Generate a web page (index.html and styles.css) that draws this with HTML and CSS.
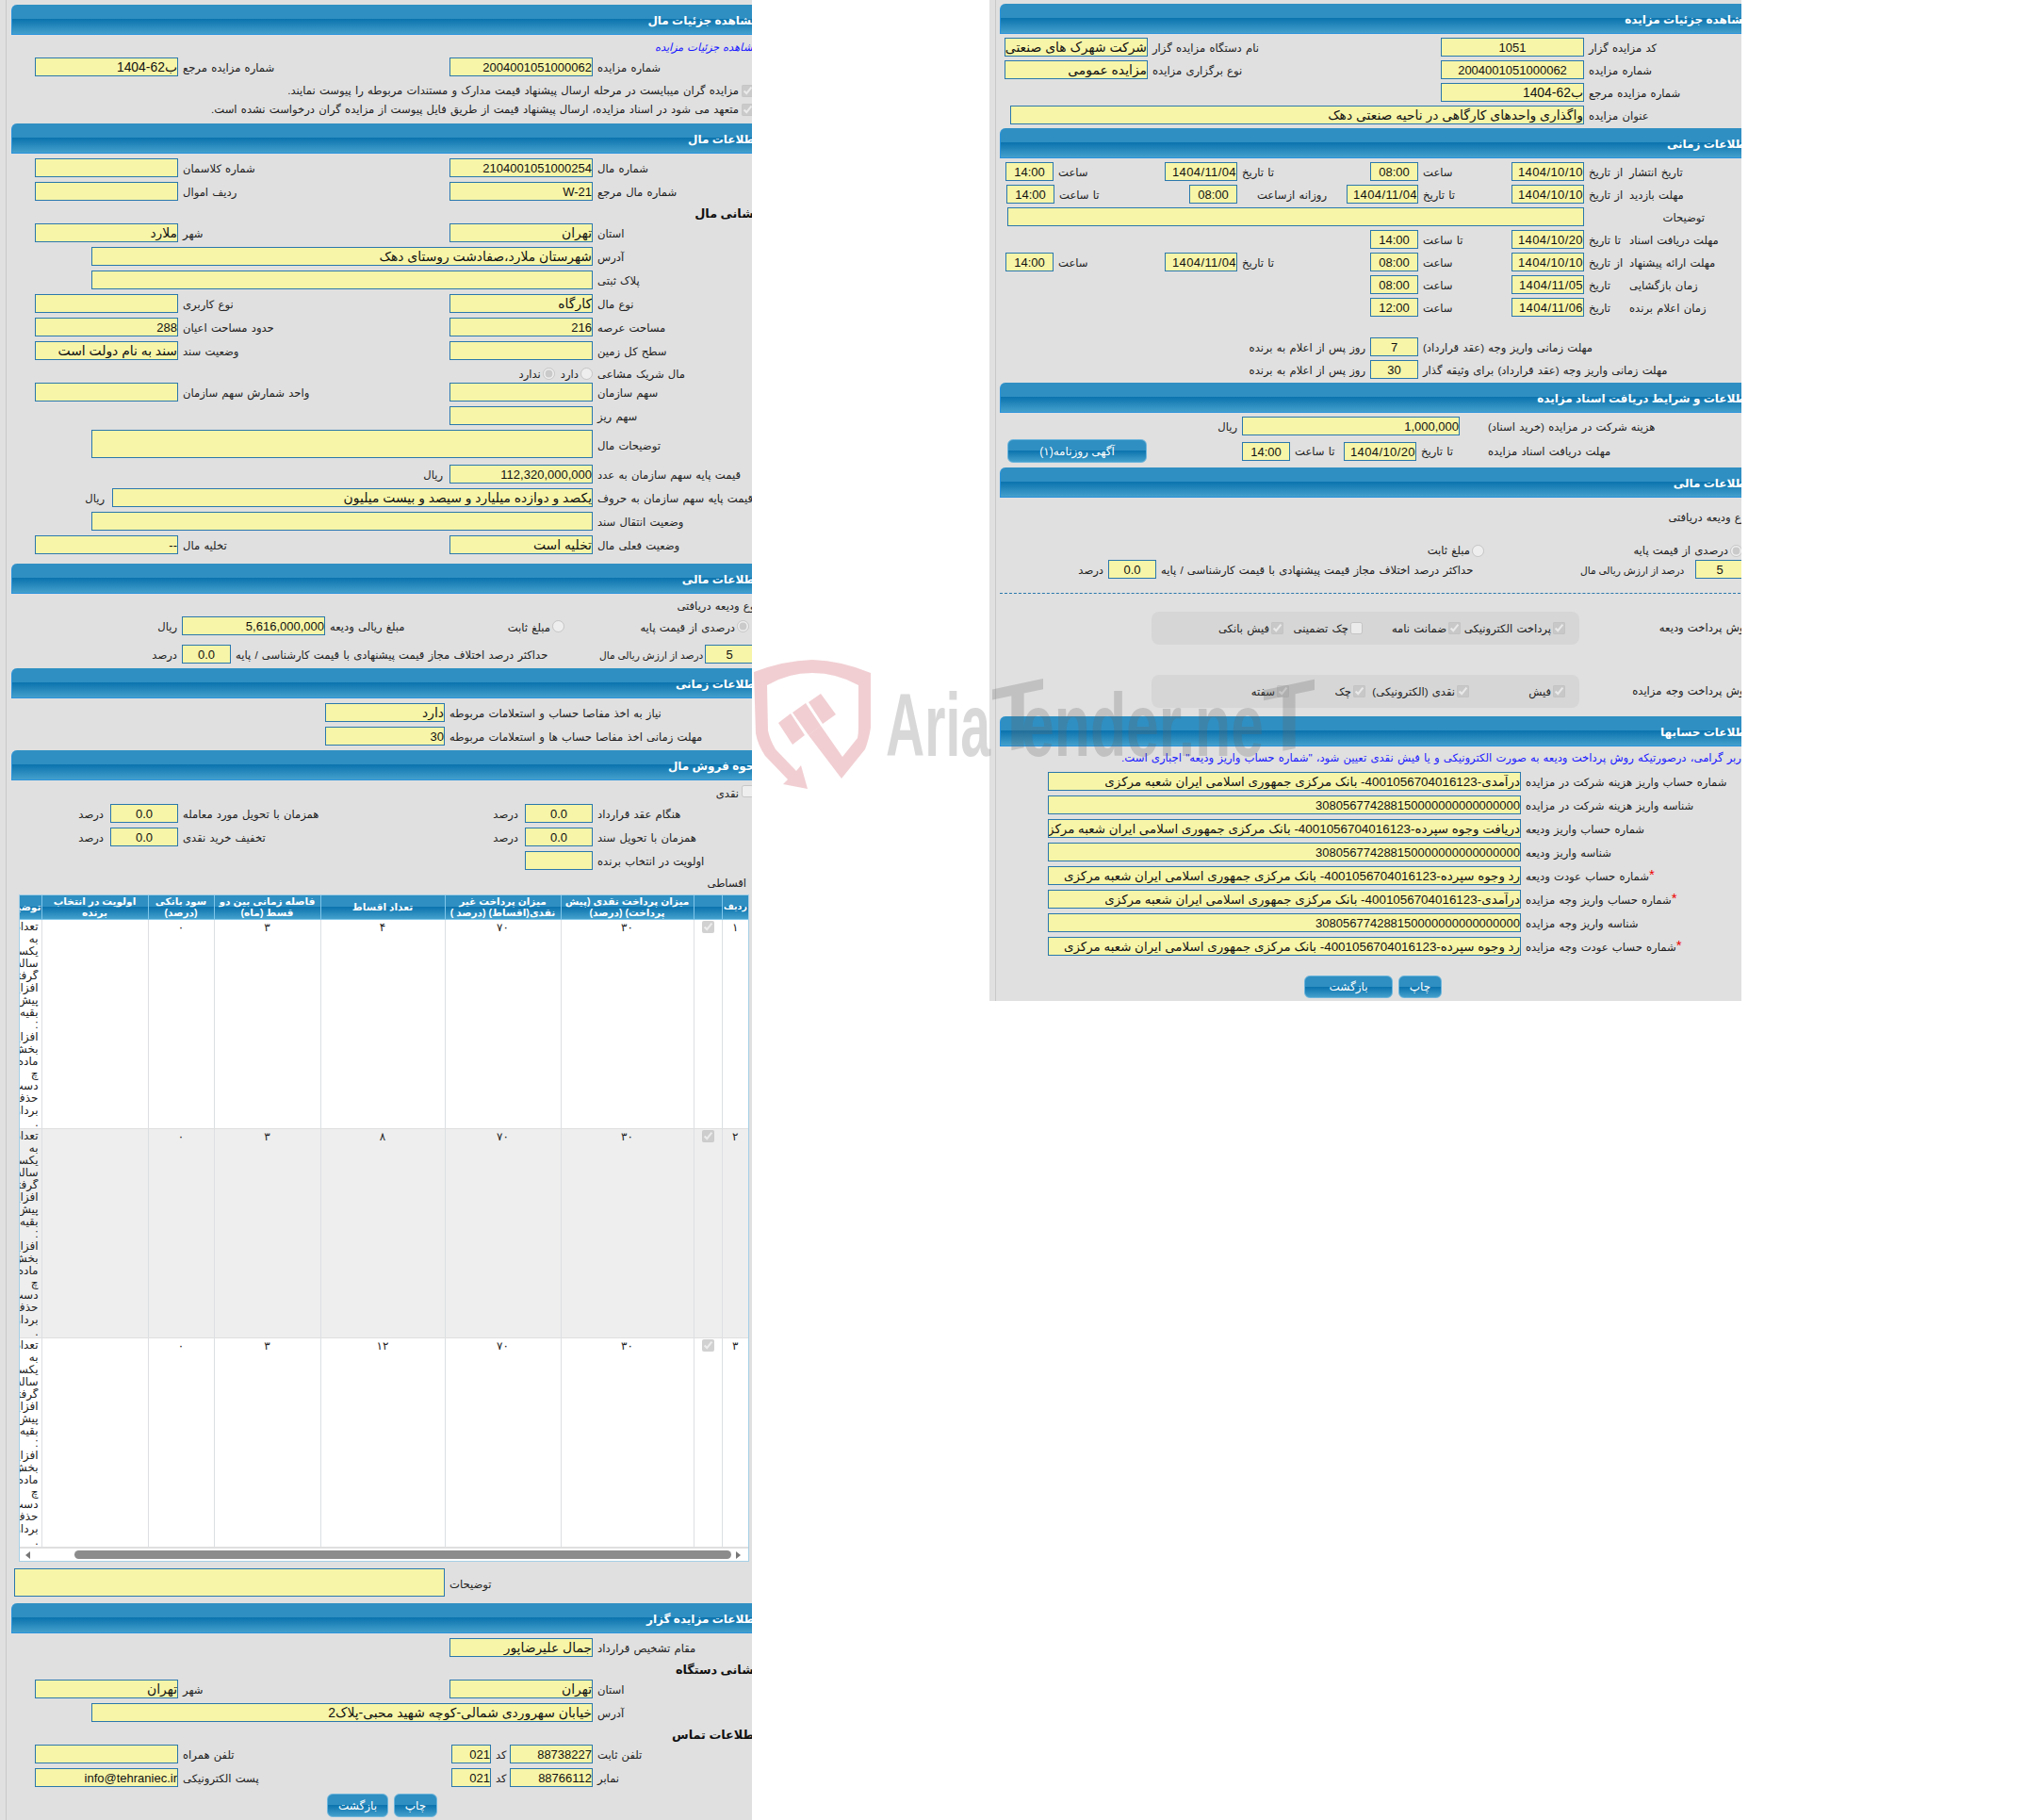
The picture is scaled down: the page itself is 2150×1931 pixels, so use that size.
FILE: index.html
```html
<!DOCTYPE html>
<html lang="fa">
<head>
<meta charset="utf-8">
<title>AriaTender</title>
<link rel="stylesheet" href="styles.css">
</head>
<body>
<div class="page">

<!-- جزئیات مال -->
<div class="panel panel-l">
<div class="inner">
<div class="body body-l">
  <h2 class="hdr">مشاهده جزئیات مال</h2>
  <div class="row r24"><a class="link" href="#">مشاهده جزئیات مزایده</a></div>
  <div class="row">
    <span class="lab w176">شماره مزایده</span><input class="fld w152" readonly value="2004001051000062">
    <span class="lab w288">شماره مزایده مرجع</span><input class="fld w152 fa" readonly value="ب62-1404">
  </div>
  <div class="row r20 chk"><input type="checkbox" disabled checked><span>مزایده گران میبایست در مرحله ارسال پیشنهاد قیمت مدارک و مستندات مربوطه را پیوست نمایند.</span></div>
  <div class="row r20 chk"><input type="checkbox" disabled checked><span>متعهد می شود در اسناد مزایده، ارسال پیشنهاد قیمت از طریق فایل پیوست از مزایده گران درخواست نشده است.</span></div>

  <h2 class="hdr mt5">اطلاعات مال</h2>
  <div class="sec">
    <div class="row">
      <span class="lab w176">شماره مال</span><input class="fld w152" readonly value="2104001051000254">
      <span class="lab w288">شماره کلاسمان</span><input class="fld w152" readonly>
    </div>
    <div class="row">
      <span class="lab w176">شماره مال مرجع</span><input class="fld w152" readonly value="W-21">
      <span class="lab w288">ردیف اموال</span><input class="fld w152" readonly>
    </div>
    <div class="sub">نشانی مال</div>
    <div class="row">
      <span class="lab w176">استان</span><input class="fld w152 fa" readonly value="تهران">
      <span class="lab w288">شهر</span><input class="fld w152 fa" readonly value="ملارد">
    </div>
    <div class="row"><span class="lab w176">آدرس</span><input class="fld w532 fa" readonly value="شهرستان ملارد،صفادشت روستای دهک"></div>
    <div class="row"><span class="lab w176">پلاک ثبتی</span><input class="fld w532" readonly></div>
    <div class="row">
      <span class="lab w176">نوع مال</span><input class="fld w152 fa" readonly value="کارگاه">
      <span class="lab w288">نوع کاربری</span><input class="fld w152" readonly>
    </div>
    <div class="row">
      <span class="lab w176">مساحت عرصه</span><input class="fld w152" readonly value="216">
      <span class="lab w288">حدود مساحت اعیان</span><input class="fld w152" readonly value="288">
    </div>
    <div class="row">
      <span class="lab w176">سطح کل زمین</span><input class="fld w152" readonly>
      <span class="lab w288">وضعیت سند</span><input class="fld w152 fa" readonly value="سند به نام دولت است">
    </div>
    <div class="row r19 opts share">
      <span class="lab w176">مال شریک مشاعی</span>
      <input type="radio" disabled><span class="opt">دارد</span>
      <input type="radio" disabled checked><span class="opt">ندارد</span>
    </div>
    <div class="row">
      <span class="lab w176">سهم سازمان</span><input class="fld w152" readonly>
      <span class="lab w288">واحد شمارش سهم سازمان</span><input class="fld w152" readonly>
    </div>
    <div class="row"><span class="lab w176">سهم ریز</span><input class="fld w152" readonly></div>
    <div class="row r37"><span class="lab w176 tall">توضیحات مال</span><textarea class="fld w532 h30" readonly></textarea></div>
    <div class="row">
      <span class="lab w176">قیمت پایه سهم سازمان به عدد</span><input class="fld w152" readonly value="112,320,000,000">
      <span class="unit u7">ریال</span>
    </div>
    <div class="row">
      <span class="lab w176">قیمت پایه سهم سازمان به حروف</span><input class="fld w510 fa" readonly value="یکصد و دوازده میلیارد و سیصد و بیست میلیون">
      <span class="unit u8">ریال</span>
    </div>
    <div class="row"><span class="lab w176">وضعیت انتقال سند</span><input class="fld w532" readonly></div>
    <div class="row">
      <span class="lab w176">وضعیت فعلی مال</span><input class="fld w152 fa" readonly value="تخلیه است">
      <span class="lab w288">تخلیه مال</span><input class="fld w152" readonly value="--">
    </div>
  </div>

  <h2 class="hdr mt5">اطلاعات مالی</h2>
  <div class="row r24 plain">نوع ودیعه دریافتی</div>
  <div class="row r30 opts-f">
    <span class="pad10"></span><input type="radio" disabled checked><span class="opt w181">درصدی از قیمت پایه</span>
    <input type="radio" disabled><span class="opt w154">مبلغ ثابت</span>
    <span class="lab w85">مبلغ ریالی ودیعه</span><input class="fld w152" readonly value="5,616,000,000">
    <span class="unit u5">ریال</span>
  </div>
  <div class="row">
    <span class="pad5"></span><input class="fld w52 ctr" readonly value="5">
    <span class="lab w117 sm">درصد از ارزش ریالی مال</span>
    <span class="lab w386">حداکثر درصد اختلاف مجاز قیمت پیشنهادی با قیمت کارشناسی / پایه</span>
    <input class="fld w52 ctr" readonly value="0.0">
    <span class="unit u5">درصد</span>
  </div>

  <h2 class="hdr">اطلاعات زمانی</h2>
  <div class="sec">
    <div class="row"><span class="lab w333">نیاز به اخذ مفاصا حساب و استعلامات مربوطه</span><input class="fld w127 fa" readonly value="دارد"></div>
    <div class="row"><span class="lab w333">مهلت زمانی اخذ مفاصا حساب ها و استعلامات مربوطه</span><input class="fld w127" readonly value="30"></div>
  </div>

  <h2 class="hdr">نحوه فروش مال</h2>
  <div class="row chk cash"><input type="checkbox" disabled><span>نقدی</span></div>
  <div class="row">
    <span class="lab w176">هنگام عقد قرارداد</span><input class="fld w72 ctr" readonly value="0.0"><span class="unit u7 w30">درصد</span>
    <span class="lab w331">همزمان با تحویل مورد معامله</span><input class="fld w72 ctr" readonly value="0.0"><span class="unit u7">درصد</span>
  </div>
  <div class="row">
    <span class="lab w176">همزمان با تحویل سند</span><input class="fld w72 ctr" readonly value="0.0"><span class="unit u7 w30">درصد</span>
    <span class="lab w331">تخفیف خرید نقدی</span><input class="fld w72 ctr" readonly value="0.0"><span class="unit u7">درصد</span>
  </div>
  <div class="row"><span class="lab w176">اولویت در انتخاب برنده</span><input class="fld w72" readonly></div>
  <div class="row r21 plain plain-in">اقساطی</div>

  <div class="grid-wrap">
    <table class="grid">
      <thead>
        <tr>
          <th class="c28">ردیف</th><th class="c30"></th><th class="c141">میزان پرداخت نقدی (پیش<br>پرداخت) (درصد)</th>
          <th class="c123">میزان پرداخت غیر<br>نقدی(اقساط) (درصد )</th><th class="c132">تعداد اقساط</th>
          <th class="c113">فاصله زمانی بین دو<br>قسط (ماه)</th><th class="c70">سود بانکی<br>(درصد)</th>
          <th class="c113">اولویت در انتخاب<br>برنده</th><th class="c40">توضیحات</th>
        </tr>
      </thead>
      <tbody>
        <tr>
          <td>۱</td><td><input type="checkbox" disabled checked></td><td>۳۰</td><td>۷۰</td><td>۴</td><td>۳</td><td>۰</td><td></td>
          <td class="notes"><span>تعداد</span><span>به</span><span>یکساله</span><span>ساله</span><span>گرفته</span><span>افزایش</span><span>پیش</span><span>بقیه</span><span>:</span><span>افزایش</span><span>بخش</span><span>ماده</span><span>چ</span><span>دست</span><span>حذف</span><span>برداری</span><span>.</span></td>
        </tr>
        <tr class="alt">
          <td>۲</td><td><input type="checkbox" disabled checked></td><td>۳۰</td><td>۷۰</td><td>۸</td><td>۳</td><td>۰</td><td></td>
          <td class="notes"><span>تعداد</span><span>به</span><span>یکساله</span><span>ساله</span><span>گرفته</span><span>افزایش</span><span>پیش</span><span>بقیه</span><span>:</span><span>افزایش</span><span>بخش</span><span>ماده</span><span>چ</span><span>دست</span><span>حذف</span><span>برداری</span><span>.</span></td>
        </tr>
        <tr>
          <td>۳</td><td><input type="checkbox" disabled checked></td><td>۳۰</td><td>۷۰</td><td>۱۲</td><td>۳</td><td>۰</td><td></td>
          <td class="notes"><span>تعداد</span><span>به</span><span>یکساله</span><span>ساله</span><span>گرفته</span><span>افزایش</span><span>پیش</span><span>بقیه</span><span>:</span><span>افزایش</span><span>بخش</span><span>ماده</span><span>چ</span><span>دست</span><span>حذف</span><span>برداری</span><span>.</span></td>
        </tr>
      </tbody>
    </table>
    <div class="hscroll"><i class="arr arr-l"></i><b class="thumb"></b><i class="arr arr-r"></i></div>
  </div>

  <div class="row r30 mt7"><span class="lab w333 tall">توضیحات</span><textarea class="fld w457 h30" readonly></textarea></div>

  <h2 class="hdr mt7">اطلاعات مزایده گزار</h2>
  <div class="sec">
    <div class="row"><span class="lab w176">مقام تشخیص قرارداد</span><input class="fld w152 fa" readonly value="جمال علیرضاپور"></div>
    <div class="sub">نشانی دستگاه</div>
    <div class="row">
      <span class="lab w176">استان</span><input class="fld w152 fa" readonly value="تهران">
      <span class="lab w288">شهر</span><input class="fld w152 fa" readonly value="تهران">
    </div>
    <div class="row"><span class="lab w176">آدرس</span><input class="fld w532 fa" readonly value="خیابان سهروردی شمالی-کوچه شهید محبی-پلاک2"></div>
    <div class="sub">اطلاعات تماس</div>
    <div class="row">
      <span class="lab w176">تلفن ثابت</span><input class="fld w88" readonly value="88738227">
      <span class="lab w20">کد</span><input class="fld w42" readonly value="021">
      <span class="lab w290">تلفن همراه</span><input class="fld w152" readonly>
    </div>
    <div class="row">
      <span class="lab w176">نمابر</span><input class="fld w88" readonly value="88766112">
      <span class="lab w20">کد</span><input class="fld w42" readonly value="021">
      <span class="lab w290">پست الکترونیکی</span><input class="fld w152" readonly value="info@tehraniec.ir">
    </div>
  </div>
  <div class="btns btns-l"><button class="btn w46">چاپ</button><button class="btn w65">بازگشت</button></div>
</div>
</div>
</div>

<!-- جزئیات مزایده -->
<div class="panel panel-r">
<div class="inner inner-r">
<div class="body body-r">
  <h2 class="hdr">مشاهده جزئیات مزایده</h2>
  <div class="sec sec4">
    <div class="row r24">
      <span class="lab w176">کد مزایده گزار</span><input class="fld w152 ctr" readonly value="1051">
      <span class="lab w311">نام دستگاه مزایده گزار</span><input class="fld w152 fa" readonly value="شرکت شهرک های صنعتی">
    </div>
    <div class="row r24">
      <span class="lab w176">شماره مزایده</span><input class="fld w152 ctr" readonly value="2004001051000062">
      <span class="lab w311">نوع برگزاری مزایده</span><input class="fld w152 fa" readonly value="مزایده عمومی">
    </div>
    <div class="row r24"><span class="lab w176">شماره مزایده مرجع</span><input class="fld w152 fa" readonly value="ب62-1404"></div>
    <div class="row r24"><span class="lab w176">عنوان مزایده</span><input class="fld w609 fa" readonly value="واگذاری واحدهای کارگاهی در ناحیه صنعتی دهک"></div>
  </div>

  <h2 class="hdr">اطلاعات زمانی</h2>
  <div class="sec sec4">
    <div class="row r24">
      <span class="lab w133">تاریخ انتشار</span><span class="lab w43">از تاریخ</span><input class="fld w77 dt" readonly value="1404/10/10">
      <span class="lab w99">ساعت</span><input class="fld w51 ctr" readonly value="08:00">
      <span class="lab w141">تا تاریخ</span><input class="fld w77 dt" readonly value="1404/11/04">
      <span class="lab w118">ساعت</span><input class="fld w51 ctr" readonly value="14:00">
    </div>
    <div class="row r24">
      <span class="lab w133">مهلت بازدید</span><span class="lab w43">از تاریخ</span><input class="fld w77 dt" readonly value="1404/10/10">
      <span class="lab w99">تا تاریخ</span><input class="fld w76 dt" readonly value="1404/11/04">
      <span class="lab w116 mid">روزانه ازساعت</span><input class="fld w51 ctr" readonly value="08:00">
      <span class="lab w143">تا ساعت</span><input class="fld w51 ctr" readonly value="14:00">
    </div>
    <div class="row r24"><span class="lab w176 ind">توضیحات</span><input class="fld w612" readonly></div>
    <div class="row r24">
      <span class="lab w133">مهلت دریافت اسناد</span><span class="lab w43">تا تاریخ</span><input class="fld w77 dt" readonly value="1404/10/20">
      <span class="lab w99">تا ساعت</span><input class="fld w51 ctr" readonly value="14:00">
    </div>
    <div class="row r24">
      <span class="lab w133">مهلت ارائه پیشنهاد</span><span class="lab w43">از تاریخ</span><input class="fld w77 dt" readonly value="1404/10/10">
      <span class="lab w99">ساعت</span><input class="fld w51 ctr" readonly value="08:00">
      <span class="lab w141">تا تاریخ</span><input class="fld w77 dt" readonly value="1404/11/04">
      <span class="lab w118">ساعت</span><input class="fld w51 ctr" readonly value="14:00">
    </div>
    <div class="row r24">
      <span class="lab w133">زمان بازگشایی</span><span class="lab w43">تاریخ</span><input class="fld w77 dt" readonly value="1404/11/05">
      <span class="lab w99">ساعت</span><input class="fld w51 ctr" readonly value="08:00">
    </div>
    <div class="row r24">
      <span class="lab w133">زمان اعلام برنده</span><span class="lab w43">تاریخ</span><input class="fld w77 dt" readonly value="1404/11/06">
      <span class="lab w99">ساعت</span><input class="fld w51 ctr" readonly value="12:00">
    </div>
    <div class="row r24 mt18">
      <span class="lab w352">مهلت زمانی واریز وجه (عقد قرارداد)</span><input class="fld w51 ctr" readonly value="7">
      <span class="unit u5">روز پس از اعلام به برنده</span>
    </div>
    <div class="row r24">
      <span class="lab w352">مهلت زمانی واریز وجه (عقد قرارداد) برای وثیقه گذار</span><input class="fld w51 ctr" readonly value="30">
      <span class="unit u5">روز پس از اعلام به برنده</span>
    </div>
  </div>

  <h2 class="hdr">اطلاعات و شرایط دریافت اسناد مزایده</h2>
  <div class="sec sec4">
    <div class="row r24">
      <span class="lab w308 pl30">هزینه شرکت در مزایده (خرید اسناد)</span><input class="fld w231" readonly value="1,000,000">
      <span class="unit u5">ریال</span>
    </div>
    <div class="row r30 docs">
      <span class="lab w308 pl30">مهلت دریافت اسناد مزایده</span><span class="lab w46">تا تاریخ</span><input class="fld w77 dt" readonly value="1404/10/20">
      <span class="lab w57">تا ساعت</span><input class="fld w51 ctr" readonly value="14:00">
      <span class="gap101"></span><button class="btn w148">آگهی روزنامه(۱)</button>
    </div>
  </div>

  <h2 class="hdr">اطلاعات مالی</h2>
  <div class="row r31 plain plain-b">نوع ودیعه دریافتی</div>
  <div class="row r35 opts opts-b">
    <span class="pad8"></span><input type="radio" disabled checked><span class="opt w259">درصدی از قیمت پایه</span>
    <input type="radio" disabled><span class="opt">مبلغ ثابت</span>
  </div>
  <div class="row r20">
    <span class="pad6"></span><input class="fld w52 ctr" readonly value="5">
    <span class="lab w127 sm">درصد از ارزش ریالی مال</span>
    <span class="lab w445">حداکثر درصد اختلاف مجاز قیمت پیشنهادی با قیمت کارشناسی / پایه</span>
    <input class="fld w51 ctr" readonly value="0.0">
    <span class="unit u5">درصد</span>
  </div>
  <div class="dash"></div>
  <div class="pay mt19">
    <span class="pay-lab">روش پرداخت ودیعه</span>
    <div class="pay-box">
      <label class="pay-item w111"><input type="checkbox" disabled checked>پرداخت الکترونیکی</label>
      <label class="pay-item w104"><input type="checkbox" disabled checked>ضمانت نامه</label>
      <label class="pay-item w84"><input type="checkbox" disabled>چک تضمینی</label>
      <label class="pay-item"><input type="checkbox" disabled checked>فیش بانکی</label>
    </div>
  </div>
  <div class="pay mt32">
    <span class="pay-lab">روش پرداخت وجه مزایده</span>
    <div class="pay-box">
      <label class="pay-item w102"><input type="checkbox" disabled checked>فیش</label>
      <label class="pay-item w110"><input type="checkbox" disabled checked>نقدی (الکترونیکی)</label>
      <label class="pay-item w81"><input type="checkbox" disabled checked>چک</label>
      <label class="pay-item"><input type="checkbox" disabled checked>سفته</label>
    </div>
  </div>

  <h2 class="hdr mt9">اطلاعات حسابها</h2>
  <div class="note">کاربر گرامی، درصورتیکه روش پرداخت ودیعه به صورت الکترونیکی و یا فیش نقدی تعیین شود، "شماره حساب واریز ودیعه" اجباری است.</div>
  <div class="accts">
    <div class="row"><span class="lab w243">شماره حساب واریز هزینه شرکت در مزایده</span><input class="fld w502 fa2" readonly value="درآمدی-4001056704016123- بانک مرکزی جمهوری اسلامی ایران شعبه مرکزی"></div>
    <div class="row"><span class="lab w243">شناسه واریز هزینه شرکت در مزایده</span><input class="fld w502" readonly value="308056774288150000000000000000"></div>
    <div class="row"><span class="lab w243">شماره حساب واریز ودیعه</span><input class="fld w502 fa2" readonly value="دریافت وجوه سپرده-4001056704016123- بانک مرکزی جمهوری اسلامی ایران شعبه مرکزی"></div>
    <div class="row"><span class="lab w243">شناسه واریز ودیعه</span><input class="fld w502" readonly value="308056774288150000000000000000"></div>
    <div class="row"><span class="lab w243"><em class="req">*</em>شماره حساب عودت ودیعه</span><input class="fld w502 fa2" readonly value="رد وجوه سپرده-4001056704016123- بانک مرکزی جمهوری اسلامی ایران شعبه مرکزی"></div>
    <div class="row"><span class="lab w243"><em class="req">*</em>شماره حساب واریز وجه مزایده</span><input class="fld w502 fa2" readonly value="درآمدی-4001056704016123- بانک مرکزی جمهوری اسلامی ایران شعبه مرکزی"></div>
    <div class="row"><span class="lab w243">شناسه واریز وجه مزایده</span><input class="fld w502" readonly value="308056774288150000000000000000"></div>
    <div class="row"><span class="lab w243"><em class="req">*</em>شماره حساب عودت وجه مزایده</span><input class="fld w502 fa2" readonly value="رد وجوه سپرده-4001056704016123- بانک مرکزی جمهوری اسلامی ایران شعبه مرکزی"></div>
  </div>
  <div class="btns btns-r"><button class="btn w46">چاپ</button><button class="btn w94">بازگشت</button></div>
</div>
</div>
</div>

<!-- واترمارک -->
<svg class="mark" width="600" height="140" viewBox="0 0 600 140">
  <g class="mark-shield">
    <path d="M0 13 Q31 1 62 0 Q93 1 124 14 L124 72 Q122 85 118 95 L93 126 L58 80 L71 70 L94 103 L110 83 Q111 78 111 72 L111 27 Q88 14 62 14 Q36 14 14 27 L15 75 Q17 85 23 95 L45 118 L50 112 L57 137 L31 132 L36 127 L12 102 Q4 90 2 78 Z"/>
    <path d="M26 67 L39 57 L54 80 L41 90 Z"/>
    <path d="M41 56 L55 46 L71 70 L58 80 Z"/>
    <path d="M58 45 L71 36 L87 58 L73 68 Z"/>
  </g>
  <g class="mark-text">
    <text x="140" y="102" font-size="95" textLength="111" lengthAdjust="spacingAndGlyphs">Aria</text>
    <text x="252" y="102" font-size="100" textLength="56" lengthAdjust="spacingAndGlyphs" transform="skewY(-12) translate(0 52)">T</text>
    <text x="284" y="102" font-size="95" textLength="257" lengthAdjust="spacingAndGlyphs">ender.ne</text>
    <text x="540" y="102" font-size="100" textLength="56" lengthAdjust="spacingAndGlyphs" transform="skewY(-12) translate(0 114)">T</text>
  </g>
</svg>

</div>
</body>
</html>
```
FILE: styles.css
```css
/* صفحه */
html, body { margin: 0; padding: 0; background: #fff; }
body { overflow: hidden; }

.page {
  position: relative;
  display: flex;
  align-items: flex-start;
  height: 1931px;
  overflow: hidden;
  font: 11.6px "Liberation Sans", "DejaVu Sans", sans-serif;
  word-spacing: 1px;
  color: #222;
}

.panel { flex: none; width: 798px; background: #e0e0e0; overflow: hidden; box-sizing: border-box; padding-left: 6px; }
.panel-l { height: 1931px; }
.panel-r { height: 1062px; margin-left: 252px; }
.inner { border-left: 1px solid #c8c8c8; padding-left: 5px; height: 100%; }
.inner-r { padding-left: 4px; }
.body { direction: rtl; padding-top: 5px; }
.body-l { width: 793px; }
.body-r { width: 796px; padding-top: 4px; }

/* هدر آبی */
.hdr {
  box-sizing: border-box;
  height: 32px;
  margin: 0;
  border: 1px solid #2a93dc;
  border-width: 0 0 1px 1px;
  border-radius: 6px 6px 0 0;
  background: linear-gradient(#2f8fc2 0, #2f8fc2 15px, #0a72ad 15px, #44a0cc 100%);
  color: #fff;
  font-size: 12px;
  font-weight: bold;
  word-spacing: 0;
  line-height: 34px;
}

.sec { padding-top: 5px; }
.sec4 { padding-top: 4px; }
.sub { height: 19px; line-height: 17px; font-size: 12.8px; font-weight: bold; word-spacing: 0; color: #111; }

.row { display: flex; height: 25px; }
.r19 { height: 19px; }
.r20 { height: 20px; }
.r21 { height: 21px; }
.r24 { height: 24px; }
.r30 { height: 30px; }
.r31 { height: 31px; }
.r35 { height: 35px; }
.r37 { height: 37px; }

.mt5 { margin-top: 5px; }
.mt7 { margin-top: 7px; }
.mt9 { margin-top: 9px; }
.mt18 { margin-top: 18px; }
.mt19 { margin-top: 19px; }
.mt32 { margin-top: 32px; }

.lab {
  display: flex;
  flex: none;
  justify-content: flex-end;
  box-sizing: border-box;
  padding-left: 5px;
  white-space: nowrap;
  line-height: 22px;
}
.lab.tall { line-height: 34px; }
.lab.mid { justify-content: center; padding-left: 0; }
.lab.ind { justify-content: flex-start; padding-right: 48px; }
.lab.pl30 { padding-left: 30px; }
.lab.sm { font-size: 10.6px; word-spacing: 0; }

.unit { flex: none; white-space: nowrap; line-height: 22px; }
.u5 { margin-right: 5px; }
.u7 { margin-right: 7px; }
.u8 { margin-right: 8px; }

.fld {
  flex: none;
  box-sizing: border-box;
  display: block;
  height: 20px;
  margin: 0;
  padding: 0;
  border: 1px solid #2a78ac;
  border-radius: 0;
  outline: none;
  resize: none;
  background: #f7f5a8;
  color: #111;
  direction: rtl;
  text-align: right;
  word-spacing: 0;
  font: 13px "Liberation Sans", "DejaVu Sans", sans-serif;
}
.fld.ctr { text-align: center; }
.fld.fa { font-size: 13.9px; }
.fld.fa2 { font-size: 13.4px; }
.fld.dt { letter-spacing: .4px; }
.h30 { height: 30px; }

.w20 { width: 20px; }
.w30 { width: 30px; }
.w42 { width: 42px; }
.w43 { width: 43px; }
.w46 { width: 46px; }
.w51 { width: 51px; }
.w52 { width: 52px; }
.w57 { width: 57px; }
.w65 { width: 65px; }
.w72 { width: 72px; }
.w76 { width: 76px; }
.w77 { width: 77px; }
.w81 { width: 81px; }
.w84 { width: 84px; }
.w85 { width: 85px; }
.w88 { width: 88px; }
.w94 { width: 94px; }
.w99 { width: 99px; }
.w102 { width: 102px; }
.w104 { width: 104px; }
.w110 { width: 110px; }
.w111 { width: 111px; }
.w116 { width: 116px; }
.w117 { width: 117px; }
.w118 { width: 118px; }
.w127 { width: 127px; }
.w133 { width: 133px; }
.w141 { width: 141px; }
.w143 { width: 143px; }
.w148 { width: 148px; }
.w152 { width: 152px; }
.w154 { width: 154px; }
.w176 { width: 176px; }
.w181 { width: 181px; }
.w231 { width: 231px; }
.w243 { width: 243px; }
.w259 { width: 259px; }
.w288 { width: 288px; }
.w290 { width: 290px; }
.w308 { width: 308px; }
.w311 { width: 311px; }
.w331 { width: 331px; }
.w333 { width: 333px; }
.w352 { width: 352px; }
.w386 { width: 386px; }
.w445 { width: 445px; }
.w457 { width: 457px; }
.w502 { width: 502px; }
.w510 { width: 510px; }
.w532 { width: 532px; }
.w609 { width: 609px; }
.w612 { width: 612px; }

.link { line-height: 26px; color: #1a1aff; font-style: italic; text-decoration: none; }
.gap101 { flex: none; width: 101px; }
.pad5 { flex: none; width: 5px; }
.pad6 { flex: none; width: 6px; }
.pad8 { flex: none; width: 8px; }
.pad10 { flex: none; width: 10px; }

input[type=checkbox], input[type=radio] { flex: none; width: 13px; height: 13px; margin: 0; }

.chk { align-items: center; }
.chk input { margin-right: 5px; }
.chk span { margin-right: 3px; white-space: nowrap; }
.cash { align-items: flex-start; padding-top: 5px; box-sizing: border-box; }
.cash span { line-height: 18px; }

.opts { align-items: center; }
.opt { flex: none; margin-right: 2px; white-space: nowrap; }
.opts .lab { line-height: 19px; }
.share input + .opt + input { margin-right: 6px; }
.opts-b { align-items: flex-end; padding-bottom: 3px; box-sizing: border-box; }
.opts-f { align-items: flex-start; }
.opts-f input[type=radio] { margin-top: 4px; }
.opts-f .opt { line-height: 23px; }
.plain { line-height: 26px; }
.plain-in { line-height: 18px; padding-right: 13px; }
.plain-b { align-items: flex-end; line-height: 20px; }

.docs input { margin-top: 3px; }
.docs .lab { line-height: 26px; }

/* جدول اقساط */
.grid-wrap {
  box-sizing: border-box;
  margin-right: 10px;
  width: 775px;
  height: 708px;
  border: 1px solid #a5cfe6;
  overflow: hidden;
  background: #fff;
}
.grid { table-layout: fixed; width: 790px; border-collapse: collapse; }
.grid th {
  box-sizing: border-box;
  height: 25px;
  padding: 0;
  border-left: 1px solid #7fc6ea;
  border-bottom: 1px solid #7fc6ea;
  background: linear-gradient(#2f8fc2 0, #2f8fc2 12px, #0a72ad 12px, #44a0cc 100%);
  color: #fff;
  font-size: 10.6px;
  font-weight: bold;
  word-spacing: 0;
  line-height: 12px;
  text-align: center;
  white-space: nowrap;
  overflow: hidden;
}
.grid th.c28 { font-size: 9.5px; }
.grid td {
  height: 222px;
  padding: 1px 0 0;
  border-left: 1px solid #dcdfe2;
  border-bottom: 1px solid #dfdfdf;
  box-sizing: border-box;
  text-align: center;
  vertical-align: top;
  line-height: 14px;
  font-size: 12px;
  overflow: hidden;
}
.grid .alt td { background: #eee; }
.grid td.notes { text-align: right; padding: 1px 3px 0 0; border-left: 0; }
.notes span { display: block; height: 13px; line-height: 13px; overflow: hidden; white-space: nowrap; }
.notes span:last-child { height: 11px; }
.c28 { width: 28px; }
.c30 { width: 30px; }
.c141 { width: 141px; }
.c123 { width: 123px; }
.c132 { width: 132px; }
.c113 { width: 113px; }
.c70 { width: 70px; }
.c40 { width: 40px; }

.hscroll {
  direction: ltr;
  display: flex;
  align-items: center;
  height: 15px;
  border-top: 1px solid #dfdfdf;
  box-sizing: border-box;
  position: relative;
}
.thumb { display: block; width: 697px; height: 9px; margin-left: 47px; border-radius: 5px; background: #8c8c8c; }
.arr { display: block; width: 0; height: 0; border: 4px solid transparent; border-width: 4px 5px; }
.arr-l { margin-left: 1px; border-right-color: #777; }
.arr-r { margin-left: 5px; border-left-color: #777; }

/* دکمه */
.btn {
  box-sizing: border-box;
  height: 25px;
  padding: 0;
  border: 1px solid #6db5dc;
  border-radius: 6px;
  background: linear-gradient(#2f8fc2 0, #2f8fc2 11px, #0a72ad 11px, #44a0cc 100%);
  color: #fff;
  font: 12px "Liberation Sans", "DejaVu Sans", sans-serif;
}
.btns { display: flex; gap: 6px; margin-top: 2px; }
.btns-l { padding-right: 341px; }
.btns-r { padding-right: 327px; margin-top: 16px; }
.btns-r .btn { height: 24px; }

/* روش پرداخت */
.dash { margin-top: 15px; border-top: 1px dashed #2a78ac; }
.pay { display: flex; height: 35px; }
.pay-lab { flex: none; width: 181px; white-space: nowrap; line-height: 34px; }
.pay-box {
  display: flex;
  flex: none;
  box-sizing: border-box;
  align-items: center;
  width: 454px;
  height: 35px;
  padding-right: 15px;
  border-radius: 8px;
  background: #d6d6d6;
}
.pay-item { display: flex; flex: none; align-items: center; white-space: nowrap; }
.pay-item input { margin-left: 2px; }

.note { height: 24px; line-height: 24px; color: #1a1aff; white-space: nowrap; }
.accts { margin-top: 3px; }
.req { color: #e00; font-style: normal; font-size: 15px; line-height: 17px; align-self: flex-start; }

/* واترمارک */
.mark { position: absolute; left: 800px; top: 700px; z-index: 5; pointer-events: none; }
.mark-shield path { fill: #e9b4ba; fill-opacity: .65; }
.mark-text text { font-family: "Liberation Sans", sans-serif; font-weight: bold; fill: rgb(100, 100, 100); fill-opacity: .25; }
```
